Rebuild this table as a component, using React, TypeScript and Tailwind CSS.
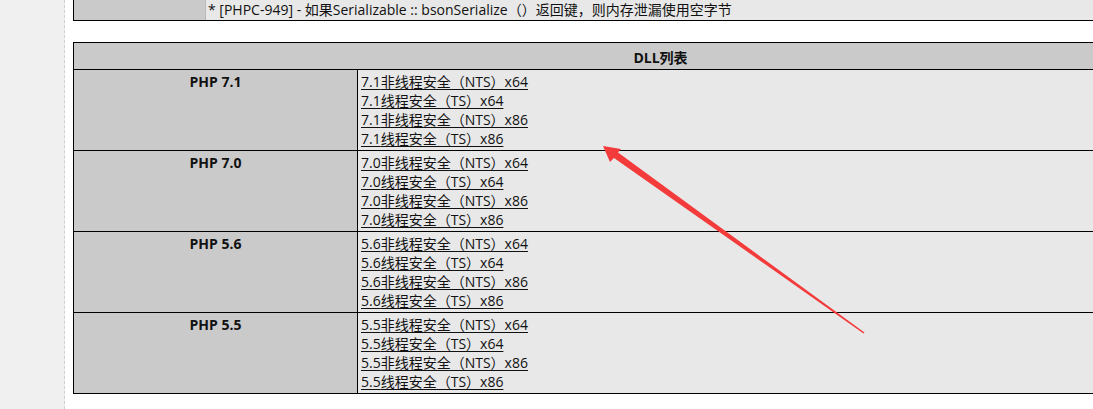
const versions = ["7.1", "7.0", "5.6", "5.5"]

const builds = [
  "非线程安全（NTS）x64",
  "线程安全（TS）x64",
  "非线程安全（NTS）x86",
  "线程安全（TS）x86",
]

function Arrow() {
  return (
    <svg className="pointer-events-none absolute left-0 top-0" width="1093" height="409" viewBox="0 0 1093 409">
      <polygon
        points="603,146 621,149 618,152.5 864.5,332.6 863.5,333.4 614,158 610,162"
        fill="#f43b3b"
      />
    </svg>
  )
}

export default function App() {
  return (
    <div className="relative flex h-[409px] w-[1093px] overflow-hidden bg-white font-['Open_Sans','Noto_Sans_CJK_SC',sans-serif] text-[14px] text-[#111]">
      <div className="w-[65px] shrink-0 border-r border-dashed border-[#d0d0d0] bg-[#f0f0f0]" />

      <div className="min-w-0 flex-1 pl-[8px]">
        <div className="flex h-[21px] w-[1175px] border-x border-b border-black">
          <div className="w-[132px] shrink-0 border-r border-[#b8b8b8] bg-[#cacaca]" />
          <div className="flex-1 bg-[#e8e8e8] pl-[2px] leading-[20px]">
            * [PHPC-949] - 如果Serializable :: bsonSerialize（）返回键，则内存泄漏使用空字节
          </div>
        </div>

        <div className="mt-[21px] w-[1175px] border border-black">
          <div className="h-[27px] border-b border-black bg-[#cacaca] pt-[4px] text-center font-bold leading-[22px]">
            DLL列表
          </div>
          {versions.map((v, i) => (
            <div key={v} className={`flex ${i < versions.length - 1 ? "border-b border-black" : ""}`}>
              <div className="w-[284px] shrink-0 border-r border-black bg-[#cacaca] pt-[2px] text-center font-bold leading-[19px]">
                PHP {v}
              </div>
              <div className="flex flex-1 flex-col bg-[#e8e8e8] py-[2px] pl-[3px] leading-[19px]">
                {builds.map((b) => (
                  <a key={b} href="#" className="w-fit underline underline-offset-2">
                    {v}
                    {b}
                  </a>
                ))}
              </div>
            </div>
          ))}
        </div>
      </div>

      <Arrow />
    </div>
  )
}
